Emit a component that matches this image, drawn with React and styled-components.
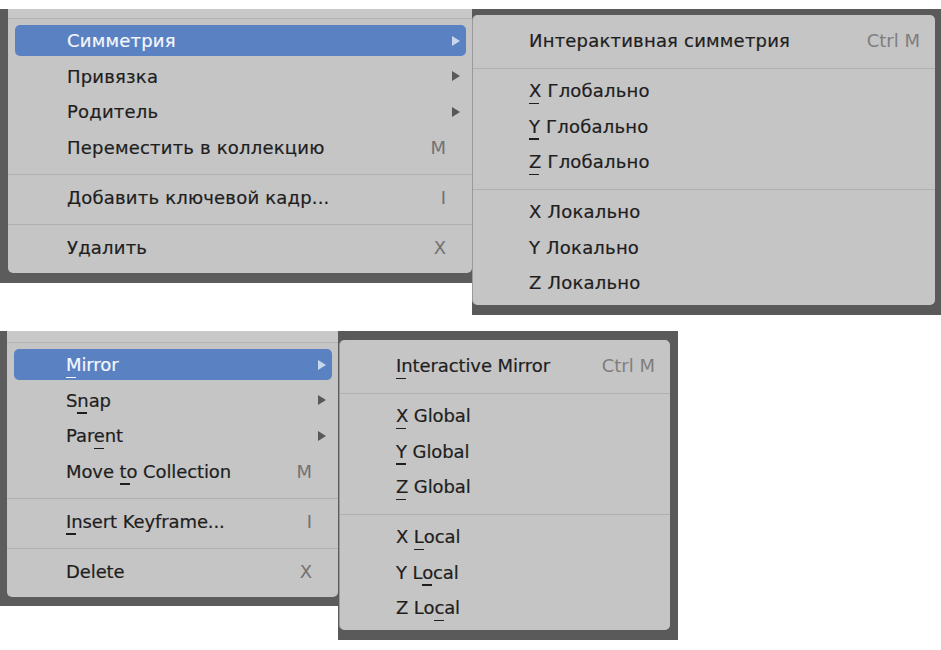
import React from 'react';
import styled, { createGlobalStyle } from 'styled-components';

const GlobalStyle = createGlobalStyle`
  html, body {
    margin: 0;
    padding: 0;
    background: #ffffff;
  }
  body {
    font-family: "DejaVu Sans", "Liberation Sans", sans-serif;
  }
`;

const Page = styled.div`
  display: flex;
  flex-direction: column;
  gap: 16px;
  padding-top: 9px;
  width: 941px;
`;

const Shot = styled.div`
  display: flex;
  align-items: flex-start;
  letter-spacing: ${p => p.$ls}px;
`;

const LeftPane = styled.div`
  background: #5c5c5c;
  padding: 0 0 ${p => p.$bottom}px ${p => p.$inset}px;
`;

const RightPane = styled.div`
  background: #5a5a5a;
  padding: ${p => p.$top}px ${p => p.$right}px 10px ${p => p.$left}px;
`;

const MainMenu = styled.div`
  width: ${p => p.$w}px;
  height: ${p => p.$h}px;
  box-sizing: border-box;
  background: #c5c5c5;
  border-radius: 0 0 5px 5px;
  display: flex;
  flex-direction: column;
`;

const TopStrip = styled.div`
  height: ${p => p.$h}px;
  flex: none;
  background: #c8c8c8;
  border-bottom: 1px solid #b2b2b2;
`;

const SubMenu = styled.div`
  width: ${p => p.$w}px;
  height: 290px;
  box-sizing: border-box;
  background: #c5c5c5;
  border-radius: 5px;
  box-shadow: -1px 0 0 #9a9a9a;
  display: flex;
  flex-direction: column;
  padding-top: 8px;
`;

const List = styled.div`
  display: flex;
  flex-direction: column;
  padding-top: ${p => p.$top || 0}px;
`;

const Row = styled.div`
  flex: none;
  height: 31px;
  margin: 2.25px 6px 2.25px 7px;
  padding: 0 6px 0 ${p => p.$indent}px;
  border-radius: 5px;
  display: flex;
  align-items: center;
  font-size: 18px;
  -webkit-text-stroke: 0.2px currentColor;
  color: ${p => (p.$active ? '#f5f7fb' : '#1e1e1e')};
  background: ${p => (p.$active ? '#5a82c3' : 'transparent')};
`;

const Label = styled.span`
  flex: 1;
  white-space: nowrap;
`;

const Mn = styled.span`
  position: relative;

  &::after {
    content: '';
    position: absolute;
    left: 0;
    bottom: -3px;
    width: 10px;
    height: 1.5px;
    background: currentColor;
  }
`;

const Shortcut = styled.span`
  color: ${p => (p.$light ? '#7e7e7e' : '#727272')};
  -webkit-text-stroke: 0;
  letter-spacing: 0;
  white-space: nowrap;
  margin-right: ${p => p.$gap}px;
`;

const ArrowSlot = styled.span`
  width: 14px;
  flex: none;
  display: flex;
  justify-content: flex-end;
  align-items: center;
`;

const Separator = styled.div`
  flex: none;
  height: 1px;
  background: #b0b0b0;
  margin: 9px 0 4.5px;
`;

const Arrow = ({ active }) => (
  <svg width="8" height="10" viewBox="0 0 8 10">
    <polygon points="0,0 8,5 0,10" fill={active ? '#c9d7ee' : '#585858'} />
  </svg>
);

const ItemLabel = ({ text, mn }) => {
  if (mn === undefined) return <Label>{text}</Label>;
  return (
    <Label>
      {text.slice(0, mn)}
      <Mn>{text[mn]}</Mn>
      {text.slice(mn + 1)}
    </Label>
  );
};

const MenuRow = ({ item, indent }) => (
  <Row $active={item.active} $indent={indent}>
    <ItemLabel text={item.text} mn={item.mn} />
    {item.shortcut && (
      <Shortcut $gap={item.sub === undefined ? 3 : 0} $light={item.light}>
        {item.shortcut}
      </Shortcut>
    )}
    {item.sub !== undefined && (
      <ArrowSlot>{item.sub && <Arrow active={item.active} />}</ArrowSlot>
    )}
  </Row>
);

const renderGroups = (groups, indent) =>
  groups.map((group, gi) => (
    <React.Fragment key={gi}>
      {gi > 0 && <Separator />}
      {group.map((item, i) => (
        <MenuRow key={i} item={item} indent={indent} />
      ))}
    </React.Fragment>
  ));

const ruMain = [
  [
    { text: 'Симметрия', sub: true, active: true },
    { text: 'Привязка', sub: true },
    { text: 'Родитель', sub: true },
    { text: 'Переместить в коллекцию', shortcut: 'M', sub: false }
  ],
  [{ text: 'Добавить ключевой кадр...', shortcut: 'I', sub: false }],
  [{ text: 'Удалить', shortcut: 'X', sub: false }]
];

const ruSub = [
  [{ text: 'Интерактивная симметрия', shortcut: 'Ctrl M', light: true }],
  [
    { text: 'X Глобально', mn: 0 },
    { text: 'Y Глобально', mn: 0 },
    { text: 'Z Глобально', mn: 0 }
  ],
  [
    { text: 'X Локально' },
    { text: 'Y Локально' },
    { text: 'Z Локально' }
  ]
];

const enMain = [
  [
    { text: 'Mirror', mn: 0, sub: true, active: true },
    { text: 'Snap', mn: 1, sub: true },
    { text: 'Parent', mn: 3, sub: true },
    { text: 'Move to Collection', mn: 5, shortcut: 'M', sub: false }
  ],
  [{ text: 'Insert Keyframe...', mn: 0, shortcut: 'I', sub: false }],
  [{ text: 'Delete', shortcut: 'X', sub: false }]
];

const enSub = [
  [{ text: 'Interactive Mirror', mn: 0, shortcut: 'Ctrl M', light: true }],
  [
    { text: 'X Global', mn: 0 },
    { text: 'Y Global', mn: 0 },
    { text: 'Z Global', mn: 0 }
  ],
  [
    { text: 'X Local', mn: 2 },
    { text: 'Y Local', mn: 3 },
    { text: 'Z Local', mn: 4 }
  ]
];

const MenuShot = ({ main, sub, ls, inset, mainW, mainH, strip, bottom, subTop, subLeft, subRight, subW }) => (
  <Shot $ls={ls}>
    <LeftPane $inset={inset} $bottom={bottom}>
      <MainMenu $w={mainW} $h={mainH}>
        <TopStrip $h={strip} />
        <List $top={4}>{renderGroups(main, 52)}</List>
      </MainMenu>
    </LeftPane>
    <RightPane $top={subTop} $left={subLeft} $right={subRight}>
      <SubMenu $w={subW}>
        <List>{renderGroups(sub, 49)}</List>
      </SubMenu>
    </RightPane>
  </Shot>
);

export default function App() {
  return (
    <>
      <GlobalStyle />
      <Page>
        <MenuShot
          main={ruMain}
          sub={ruSub}
          ls={0.2}
          inset={8}
          mainW={464}
          mainH={264}
          strip={9}
          bottom={10}
          subTop={6}
          subLeft={1}
          subRight={6}
          subW={462}
        />
        <MenuShot
          main={enMain}
          sub={enSub}
          ls={-0.1}
          inset={7}
          mainW={331}
          mainH={266}
          strip={11}
          bottom={9}
          subTop={9}
          subLeft={2}
          subRight={8}
          subW={330}
        />
      </Page>
    </>
  );
}
